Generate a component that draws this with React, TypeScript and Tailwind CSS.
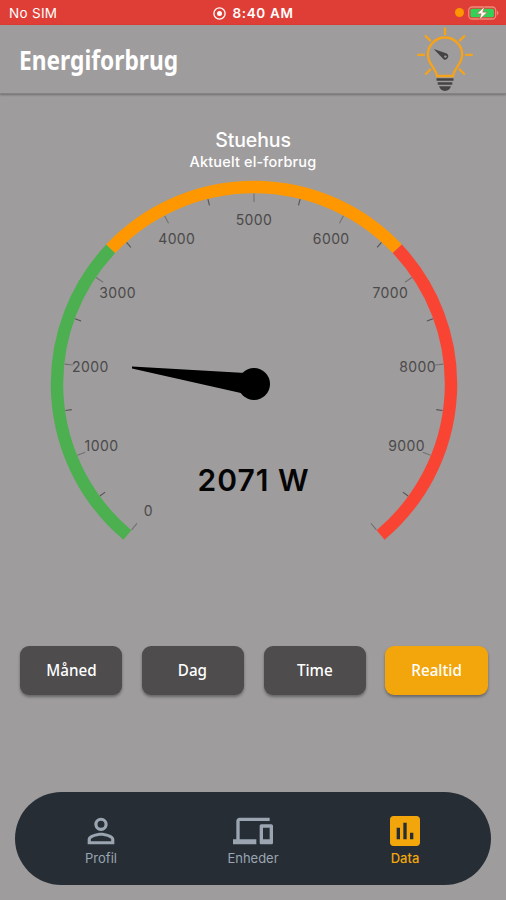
import { MdAssessment, MdOutlineDevices, MdPersonOutline } from "react-icons/md";
import clsx from "clsx";

const CX = 254;
const CY = 204;
const START = 130;
const SWEEP = 280;
const MAX = 10000;

const zones = [
  { from: 0, to: MAX / 3, color: "#4caf50" },
  { from: MAX / 3, to: (MAX / 3) * 2, color: "#ff9800" },
  { from: (MAX / 3) * 2, to: MAX, color: "#f94434" },
];

const periods = [{ label: "Måned" }, { label: "Dag" }, { label: "Time" }, { label: "Realtid", active: true }];

const tabs = [
  { label: "Profil", icon: MdPersonOutline },
  { label: "Enheder", icon: MdOutlineDevices },
  { label: "Data", icon: MdAssessment, active: true },
];

function point(value: number, radius: number) {
  const a = ((START + (value / MAX) * SWEEP) * Math.PI) / 180;
  return { x: CX + radius * Math.cos(a), y: CY + radius * Math.sin(a) };
}

function arc(from: number, to: number, radius: number) {
  const a = point(from, radius);
  const b = point(to, radius);
  return `M${a.x} ${a.y}A${radius} ${radius} 0 0 1 ${b.x} ${b.y}`;
}

function StatusBar() {
  return (
    <div className="grid h-[25px] grid-cols-3 items-center bg-[#df3e36] px-2 pt-0.5 text-[13.5px] text-white">
      <span className="pl-px tracking-[0.3px]">No SIM</span>
      <div className="flex items-center justify-center gap-[6px] pl-px">
        <svg width="13" height="13" viewBox="0 0 13 13" fill="none" stroke="white">
          <circle cx="6.5" cy="6.5" r="5.6" strokeWidth="1.3" />
          <circle cx="6.5" cy="6.5" r="2.5" fill="white" stroke="none" />
        </svg>
        <span className="text-[13.5px] font-semibold tracking-[0.65px] whitespace-nowrap">8:40 AM</span>
      </div>
      <div className="flex items-center justify-end gap-[4px] pb-0.5">
        <span className="size-[9px] rounded-full bg-[#ff9500]" />
        <svg className="-mr-[2px]" width="32" height="14" viewBox="0 0 32 14">
          <rect x="0.7" y="1" width="27" height="12" rx="3.5" fill="none" stroke="#ee8a7c" strokeWidth="1.3" />
          <rect x="2.5" y="2.8" width="23.4" height="8.4" rx="1.5" fill="#32d158" />
          <path d="M29 4.5q3 2.5 0 5z" fill="#ee8a7c" />
          <path d="M16.5 0.7 8.8 7.8h4.4L11.5 13.5l7.8-7.3h-4.6z" fill="white" stroke="#df3e36" strokeWidth="0.5" />
        </svg>
      </div>
    </div>
  );
}

function BulbLogo() {
  return (
    <svg width="58" height="66" viewBox="0 0 58 66" fill="none">
      <g stroke="#f5a31d" strokeWidth="2.4">
        <path d="M20.9 50C20.4 43 11.8 37.5 11.8 28.7a17.2 17.2 0 0 1 34.4 0C46.2 37.5 37.6 43 37.1 50z" />
        <path d="M29 1.5v7.5M9 9.5l5.8 5.6M49 9.5l-5.8 5.6M1.3 28.9h7.5M49.2 28.9h7.5M9.2 48.5l5.8-5.6M48.8 48.5 43 42.9" />
      </g>
      <path d="M20.5 53.5h17M21.7 57.5h14.6" stroke="#454344" strokeWidth="2.5" />
      <path d="M23 60.3h12c-1.2 3.2-3 4.6-6 4.6s-4.8-1.4-6-4.6z" fill="#454344" />
      <path d="M17.7 23 30.8 27.5a3.4 3.4 0 0 1-3 6z" fill="#454344" />
      <circle cx="29.4" cy="30.6" r="1.2" fill="#9e9c9c" />
    </svg>
  );
}

function Gauge() {
  const ticks = Array.from({ length: 21 }, (_, i) => i * 500);
  const labels = Array.from({ length: 10 }, (_, i) => i * 1000);

  return (
    <svg className="block" width="506" height="370" viewBox="0 0 506 370">
      {ticks.map((v) => {
        const a = point(v, 190.5);
        const b = point(v, v % 1000 ? 184 : 182);
        return (
          <line
            key={v}
            x1={a.x}
            y1={a.y}
            x2={b.x}
            y2={b.y}
            stroke={v % 1000 ? "#555354" : "#737172"}
            strokeWidth="1.1"
          />
        );
      })}
      {zones.map((z) => (
        <path key={z.color} d={arc(z.from, z.to, 197)} stroke={z.color} strokeWidth="12.4" fill="none" />
      ))}
      {labels.map((v) => {
        const p = point(v, 164.5);
        return (
          <text
            key={v}
            x={p.x}
            y={p.y + 5.5}
            textAnchor="middle"
            fontSize="14"
            letterSpacing="0.4"
            fill="#4b494a"
          >
            {v}
          </text>
        );
      })}
      <path d="M132 186.4 254 193.5 252 215.5 132 188.4z" fill="black" />
      <circle cx={CX} cy={CY} r="16" fill="black" />
      <text x="253.5" y="311" textAnchor="middle" fontSize="30" fontWeight="600" letterSpacing="1" fill="#050505">
        2071 W
      </text>
    </svg>
  );
}

export default function App() {
  return (
    <div className="flex h-[900px] w-[506px] flex-col overflow-hidden bg-[#9e9c9c] font-['Inter',sans-serif]">
      <StatusBar />

      <header className="flex h-[69px] shrink-0 items-center justify-between border-b border-[#858383] pr-8 pl-[19px] shadow-[0_1px_2px_rgba(0,0,0,0.3)]">
        <h1 className="origin-left scale-x-[0.875] pt-0.5 font-['Noto_Sans',sans-serif] text-[26px] leading-8 font-bold text-white">
          Energiforbrug
        </h1>
        <BulbLogo />
      </header>

      <section className="flex h-[86px] shrink-0 flex-col items-center pt-[34px] text-white">
        <h2 className="text-[19.5px] leading-6 font-medium tracking-[-0.1px]">Stuehus</h2>
        <p className="pt-px text-[14.5px] leading-[17px] font-medium tracking-[0.15px]">Aktuelt el-forbrug</p>
      </section>

      <Gauge />

      <div className="mt-[96px] grid shrink-0 grid-cols-4 gap-[19.5px] pr-[18.5px] pl-5">
        {periods.map((p) => (
          <button
            key={p.label}
            className={clsx(
              "flex h-[49px] items-center justify-center rounded-[9px] pb-px font-['Noto_Sans',sans-serif] text-[16px] font-medium text-white shadow-[0_2px_3px_rgba(0,0,0,0.35)]",
              p.active ? "bg-[#f2a60c]" : "bg-[#4e4c4d]",
            )}
          >
            <span className="scale-x-[0.95]">{p.label}</span>
          </button>
        ))}
      </div>

      <nav className="mx-[15px] mt-auto mb-[15px] grid h-[93px] shrink-0 grid-cols-3 rounded-full bg-[#262d35] px-[10px]">
        {tabs.map(({ label, icon: Icon, active }) => (
          <div
            key={label}
            className={clsx(
              "flex flex-col items-center pt-[19px] text-[13px] leading-4",
              active ? "font-medium text-[#f2a60c]" : "text-[#9aa5b1]",
            )}
          >
            <Icon size={40} />
            <span className="-mt-px">{label}</span>
          </div>
        ))}
      </nav>
    </div>
  );
}
